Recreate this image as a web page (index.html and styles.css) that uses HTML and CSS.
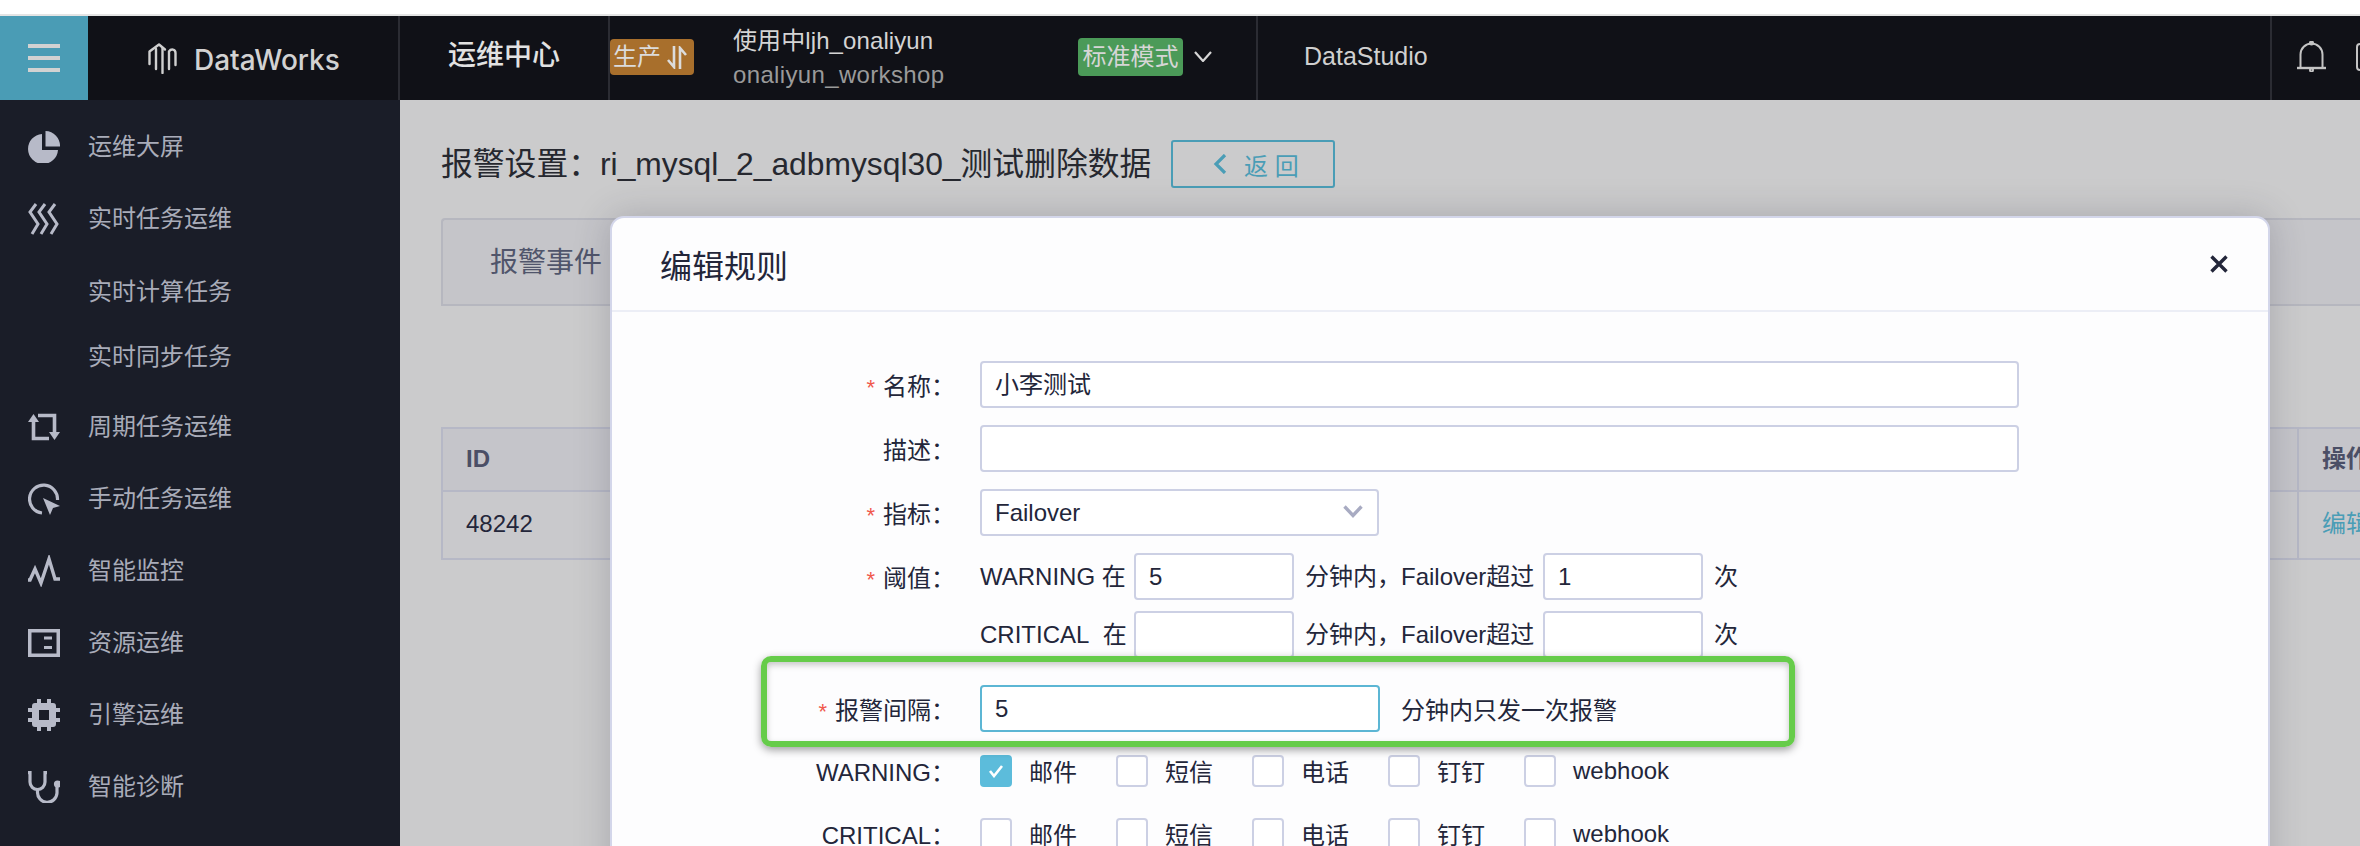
FILE: index.html
```html
<!DOCTYPE html>
<html lang="zh-CN">
<head>
<meta charset="utf-8">
<title>DataWorks 运维中心</title>
<link rel="stylesheet" href="styles.css">
</head>
<body>
<div class="app">
  <header class="topbar">
    <button class="burger" aria-label="菜单"><span></span><span></span><span></span></button>
    <div class="brand">
      <svg class="brand-logo" viewBox="0 0 29 32" fill="none" stroke="#cfcfcf" stroke-width="2.4" stroke-linecap="round" stroke-linejoin="round"><path d="M1.5 22V9.5L11 2.5 17 7.5"/><path d="M8 27V7"/><path d="M14.5 31V6"/><path d="M21 27V9.5C23 6.500 27.500 7 27.500 11V23"/></svg>
      <span class="brand-name">DataWorks</span>
    </div>
    <div class="center-name">运维中心</div>
    <div class="env">生产<svg class="env-arrows" viewBox="0 0 20 23" fill="none" stroke="#dcdcdc" stroke-width="2.6"><path d="M7 0V21L1 14"/><path d="M13 23V2L19 9"/></svg></div>
    <div class="user">
      <div class="user-name">使用中ljh_onaliyun</div>
      <div class="user-space">onaliyun_workshop</div>
    </div>
    <div class="mode">标准模式</div>
    <svg class="mode-caret" viewBox="0 0 18 11" fill="none" stroke="#d6d6d6" stroke-width="2.2"><path d="M1 1L9 10 17 1"/></svg>
    <div class="studio">DataStudio</div>
    <div class="tools">
      <svg class="bell" viewBox="0 0 29 31" fill="none" stroke="#c4c4c4" stroke-width="2"><path d="M3.500 27V13.500A11 11 0 0 1 25.500 13.500V27"/><path d="M0 27H29" stroke-width="2.400"/><circle cx="14.500" cy="2" r="1.500" fill="#c4c4c4"/><circle cx="14.500" cy="29" r="1.500"/></svg>
      <span class="tool-box"></span>
    </div>
  </header>
  <div class="main">
    <nav class="sidebar">
      <a class="nav-item">
        <svg class="nav-icon" viewBox="0 0 32 32" fill="#b7bac8"><path d="M14 3A15 15 0 1 0 30 19H14Z"/><path d="M17.500 0V15.500H32A15 15 0 0 0 17.500 0Z"/></svg>
        运维大屏</a>
      <a class="nav-item">
        <svg class="nav-icon" viewBox="0 0 32 32" fill="none" stroke="#b7bac8" stroke-width="3"><path d="M8 1L2 9 10 21 4 31"/><path d="M17 1L11 9 19 21 13 31"/><path d="M27 1L21 9 29 21 23 31"/></svg>
        实时任务运维</a>
      <div class="nav-group">
        <a class="nav-sub">实时计算任务</a>
        <a class="nav-sub">实时同步任务</a>
      </div>
      <a class="nav-item">
        <svg class="nav-icon" viewBox="0 0 32 28" fill="#b7bac8"><path d="M5.500 8V25.500H21M10 2.500H26.500V20" fill="none" stroke="#b7bac8" stroke-width="3.600"/><path d="M0 9L5.500 1 11 9Z"/><path d="M21 19L26.500 27 32 19Z"/></svg>
        周期任务运维</a>
      <a class="nav-item">
        <svg class="nav-icon" viewBox="0 0 32 32" fill="#b7bac8"><path d="M29.500 17A14 14 0 1 0 14 30" fill="none" stroke="#b7bac8" stroke-width="3.200"/><path d="M15 15L32 23 25 25 22 32Z"/></svg>
        手动任务运维</a>
      <a class="nav-item">
        <svg class="nav-icon" viewBox="0 0 32 30" fill="none" stroke="#b7bac8" stroke-width="3.400"><path d="M0 24H2L7 13 13 27 21 3 27 23H32"/></svg>
        智能监控</a>
      <a class="nav-item">
        <svg class="nav-icon" viewBox="0 0 32 28" fill="#b7bac8"><path fill-rule="evenodd" d="M0 0H32V28H0ZM3.500 3.500V24.500H28.500V3.500Z"/><path d="M16 7.500H24V10.500H16ZM16 17H24V20H16Z"/></svg>
        资源运维</a>
      <a class="nav-item">
        <svg class="nav-icon" viewBox="0 0 32 32" fill="#b7bac8"><path fill-rule="evenodd" d="M7 4H25A3 3 0 0 1 28 7V25A3 3 0 0 1 25 28H7A3 3 0 0 1 4 25V7A3 3 0 0 1 7 4ZM11 11V21H21V11Z"/><path d="M9 0H13V5H9ZM19 0H23V5H19ZM9 27H13V32H9ZM19 27H23V32H19ZM0 9H5V13H0ZM0 19H5V23H0ZM27 9H32V13H27ZM27 19H32V23H27Z"/></svg>
        引擎运维</a>
      <a class="nav-item">
        <svg class="nav-icon" viewBox="0 0 32 32" fill="none" stroke="#b7bac8" stroke-width="3.200"><path d="M0 1.600H2V11A7.500 7.500 0 0 0 17 11V1.600H19"/><path d="M9.500 18.500V21A9.500 9.500 0 0 0 29 22V15"/><circle cx="29.500" cy="13" r="2" fill="#b7bac8"/></svg>
        智能诊断</a>
    </nav>
    <main class="content">
      <div class="page-head">
        <h1 class="page-title">报警设置：ri_mysql_2_adbmysql30_测试删除数据</h1>
        <button class="back"><svg class="back-icon" viewBox="0 0 14 20" fill="none" stroke="#4a9db6" stroke-width="3.200"><path d="M12 1L3 10 12 19"/></svg><span>返 回</span></button>
      </div>
      <div class="tabs"><span class="tab">报警事件</span></div>
      <div class="table">
        <div class="cell head">ID</div><div class="cell head action">操作</div>
        <div class="cell">48242</div><div class="cell action link">编辑</div>
      </div>
    </main>
  </div>

  <section class="modal">
    <div class="modal-head">
      <h2 class="modal-title">编辑规则</h2>
      <svg class="modal-close" viewBox="0 0 18 18" fill="none" stroke="#23263a" stroke-width="3.400"><path d="M1.500 1.500L16.500 16.500M16.500 1.500L1.500 16.500"/></svg>
    </div>
    <div class="form">
      <div class="row">
        <label class="label"><i class="star">*</i>名称：</label>
        <div class="input wide">小李测试</div>
      </div>
      <div class="row">
        <label class="label">描述：</label>
        <div class="input wide"></div>
      </div>
      <div class="row">
        <label class="label"><i class="star">*</i>指标：</label>
        <div class="input select">Failover<svg class="select-caret" viewBox="0 0 20 13" fill="none" stroke="#a8abc2" stroke-width="3.400"><path d="M1.500 1.500L10 10.500 18.500 1.500"/></svg></div>
      </div>
      <div class="row row-tight">
        <label class="label"><i class="star">*</i>阈值：</label>
        <div class="threshold">
          <span>WARNING 在</span><div class="input">5</div><span class="after">分钟内，Failover超过</span><div class="input">1</div><span class="after">次</span>
        </div>
      </div>
      <div class="row row-close">
        <label class="label"></label>
        <div class="threshold">
          <span>CRITICAL&nbsp;&nbsp;在</span><div class="input"></div><span class="after">分钟内，Failover超过</span><div class="input"></div><span class="after">次</span>
        </div>
      </div>
      <div class="row row-far">
        <label class="label"><i class="star">*</i>报警间隔：</label>
        <div class="input focus">5</div>
        <span class="hint">分钟内只发一次报警</span>
      </div>
      <div class="row row-check">
        <label class="label">WARNING：</label>
        <div class="checks">
          <span class="check"><i class="box on"><svg viewBox="0 0 16 14" fill="none" stroke="#fff" stroke-width="2.600"><path d="M2 7L6 12 14 2"/></svg></i>邮件</span>
          <span class="check"><i class="box"></i>短信</span>
          <span class="check"><i class="box"></i>电话</span>
          <span class="check"><i class="box"></i>钉钉</span>
          <span class="check"><i class="box"></i>webhook</span>
        </div>
      </div>
      <div class="row">
        <label class="label">CRITICAL：</label>
        <div class="checks">
          <span class="check"><i class="box"></i>邮件</span>
          <span class="check"><i class="box"></i>短信</span>
          <span class="check"><i class="box"></i>电话</span>
          <span class="check"><i class="box"></i>钉钉</span>
          <span class="check"><i class="box"></i>webhook</span>
        </div>
      </div>
    </div>
    <div class="callout"></div>
  </section>
</div>
</body>
</html>
```
FILE: styles.css
```css
* { box-sizing: border-box; }
html, body { margin: 0; height: 100%; overflow: hidden; background: #fff; }
body { font-family: "Liberation Sans", "Noto Sans CJK SC", sans-serif; font-size: 24px; color: #23263a; }

.app { position: relative; height: 846px; padding-top: 16px; overflow: hidden; border-top: 0; }
.app::before { content: ""; position: absolute; left: 0; right: 0; top: 14px; height: 2px; background: #e4e4e4; }

/* top bar */
.topbar { display: flex; align-items: center; height: 84px; background: #101117; color: #d4d4d4; }
.burger { flex: none; display: flex; flex-direction: column; justify-content: center; gap: 8px; width: 88px; height: 84px; padding: 0 28px; border: 0; background: #4a9cb5; }
.burger span { display: block; height: 4px; background: #d2d2d2; }
.brand { flex: none; display: flex; align-items: center; width: 312px; height: 84px; padding-left: 60px; border-right: 2px solid #2b2c33; }
.brand-logo { width: 29px; height: 32px; margin-right: 17px; }
.brand-name { font-family: Inter, "Liberation Sans", sans-serif; font-size: 28px; font-weight: 500; line-height: 32px; margin-top: 4px; color: #d2d2d2; }
.center-name { flex: none; width: 210px; height: 84px; padding-left: 48px; border-right: 2px solid #2b2c33; font-size: 28px; font-weight: 500; line-height: 80px; color: #e2e2e2; }
.env { flex: none; display: flex; align-items: center; width: 84px; height: 36px; margin-top: -2px; padding-left: 3px; border-radius: 4px; background: #a86f2c; line-height: 36px; color: #dcdcdc; }
.env-arrows { width: 20px; height: 23px; margin-left: 6px; }
.user { flex: none; width: 345px; margin-left: 39px; line-height: 34px; }
.user-name { letter-spacing: .1px; color: #d4d4d4; }
.user-space { letter-spacing: .35px; color: #9a9a9a; }
.mode { flex: none; width: 105px; height: 38px; margin-top: -2px; border-radius: 4px; background: #4b9a58; text-align: center; line-height: 38px; color: #d6d6d6; }
.mode-caret { flex: none; width: 18px; height: 11px; margin: -3px 0 0 11px; }
.studio { flex: 1; height: 84px; margin-left: 44px; padding-left: 46px; border-left: 2px solid #2b2c33; font-size: 25px; line-height: 80px; color: #d0d0d0; }
.tools { flex: none; display: flex; align-items: center; width: 90px; height: 84px; padding-left: 25px; border-left: 2px solid #2b2c33; }
.bell { flex: none; width: 29px; height: 31px; margin-top: -4px; }
.tool-box { flex: none; width: 24px; height: 28px; margin: -2px 0 0 30px; border: 2px solid #c4c4c4; border-radius: 4px; }

/* layout */
.main { display: flex; height: 746px; }
.sidebar { flex: none; width: 400px; padding-top: 11px; background: #1a1d28; color: #a9acb9; }
.nav-item { display: flex; align-items: center; height: 72px; padding-left: 28px; line-height: 32px; }
.nav-icon { flex: none; width: 32px; height: 32px; margin-right: 28px; }
.nav-group { padding: 4px 0 2px; }
.nav-sub { display: block; height: 65px; padding-left: 88px; line-height: 65px; }

.content { flex: 1; min-width: 0; padding: 40px 0 0 41px; overflow: hidden; background: #cbcbcc; }
.page-head { display: flex; align-items: center; height: 48px; }
.page-title { margin: 0; font-size: 31.8px; font-weight: 400; line-height: 48px; color: #26282f; white-space: nowrap; }
.back { display: flex; align-items: center; justify-content: center; gap: 17px; width: 164px; height: 48px; margin-left: 20px; padding: 0 0 0 5px; border: 2px solid #4a9db6; border-radius: 3px; background: transparent; font: inherit; color: #4a9db6; }
.back-icon { width: 14px; height: 20px; }

.tabs { width: 2000px; height: 88px; margin-top: 30px; border: 2px solid #b6b7bf; border-right: 0; background: #c5c5c9; border-radius: 4px 0 0 0; padding-left: 47px; line-height: 86px; }
.tab { font-size: 28px; color: #50556b; }

.table { display: grid; grid-template-columns: 1854px 146px; grid-template-rows: 63px 66px; width: 2000px; margin-top: 121px; border: 2px solid #b6b8c6; border-right: 0; background: #c9c9cc; }
.cell { padding-left: 23px; line-height: 64px; color: #23263a; }
.head { border-bottom: 2px solid #b6b8c6; background: #c5c5ca; font-weight: 700; color: #4b4f66; line-height: 60px; }
.action { border-left: 2px solid #b6b8c6; }
.link { color: #4a9db6; }

/* modal */
.modal { position: absolute; left: 610px; top: 216px; width: 1660px; height: 700px; border: 2px solid #d3d6ea; border-radius: 14px; background: #fdfdfe; box-shadow: 0 0 36px rgba(40, 40, 60, .22); }
.modal-head { display: flex; align-items: center; justify-content: space-between; height: 94px; padding: 0 40px 0 48px; border-bottom: 2px solid #eceef6; }
.modal-title { margin: 0; font-size: 32px; font-weight: 400; color: #23263a; }
.modal-close { width: 18px; height: 18px; }

.form { padding-top: 49px; }
.row { display: flex; align-items: center; height: 47px; margin-bottom: 17px; }
.row-tight { margin-bottom: 11px; }
.row-close { margin-bottom: 27px; }
.row-far { margin-bottom: 15px; }
.row-check { margin-bottom: 16px; }
.label { flex: none; width: 343px; text-align: right; white-space: nowrap; }
.star { margin-right: 8px; font-size: 22px; font-style: normal; color: #f0584c; }
.input { flex: none; height: 47px; margin-left: 25px; padding: 0 13px; border: 2px solid #ccd0e4; border-radius: 4px; background: #fff; line-height: 43px; }
.wide { width: 1039px; }
.select { position: relative; width: 399px; }
.select-caret { position: absolute; right: 14px; top: 14px; width: 20px; height: 13px; }
.threshold { display: grid; grid-template-columns: 154px 160px 249px 160px auto; margin-left: 25px; line-height: 47px; white-space: nowrap; }
.threshold .input { margin-left: 0; line-height: 43px; }
.after { padding-left: 11px; }
.focus { width: 400px; border-color: #5cb6d4; }
.hint { margin-left: 21px; }
.checks { display: grid; grid-template-columns: repeat(5, 136px); margin-left: 25px; }
.check { display: flex; align-items: center; gap: 17px; white-space: nowrap; }
.box { flex: none; display: flex; align-items: center; justify-content: center; width: 32px; height: 32px; border: 2px solid #ccd0e4; border-radius: 4px; background: #fff; }
.box.on { border-color: #5cbcdb; background: #5cbcdb; }
.box svg { width: 16px; height: 14px; }

.callout { position: absolute; left: 149px; top: 438px; width: 1034px; height: 91px; border: 6px solid #66cc4a; border-radius: 10px; box-shadow: 0 3px 8px rgba(0, 0, 0, .38), inset 0 3px 6px rgba(0, 0, 0, .22); pointer-events: none; }
```
